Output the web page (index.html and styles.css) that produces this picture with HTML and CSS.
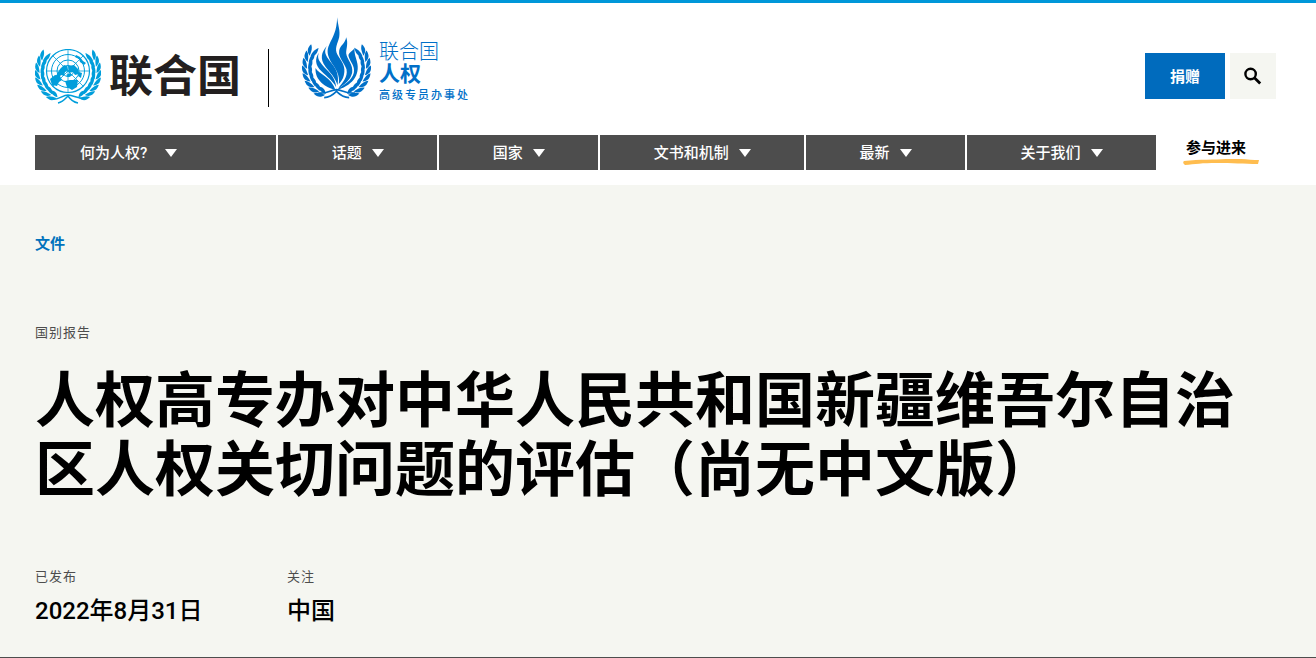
FILE: index.html
```html
<!DOCTYPE html>
<html lang="zh-CN">
<head>
<meta charset="utf-8">
<meta name="viewport" content="width=device-width, initial-scale=1">
<title>人权高专办对中华人民共和国新疆维吾尔自治区人权关切问题的评估</title>
<link rel="stylesheet" href="styles.css">
</head>
<body>
<svg class="defs" aria-hidden="true">
  <defs>
    <g id="leaf-pair">
      <path d="M0 5C5 3 6 0 5 -5C2 -3 1 0 0 5Z"/>
      <path d="M-1 5C-5 2 -5 -1 -3 -6C-1 -3 0 0 -1 5Z"/>
    </g>
    <g id="branch">
      <use href="#leaf-pair" transform="rotate(56) translate(0 -28) rotate(-90)"/>
      <use href="#leaf-pair" transform="rotate(69) translate(0 -28) rotate(-90)"/>
      <use href="#leaf-pair" transform="rotate(82) translate(0 -28) rotate(-90)"/>
      <use href="#leaf-pair" transform="rotate(95) translate(0 -28) rotate(-90)"/>
      <use href="#leaf-pair" transform="rotate(108) translate(0 -28) rotate(-90)"/>
      <use href="#leaf-pair" transform="rotate(121) translate(0 -28) rotate(-90)"/>
      <use href="#leaf-pair" transform="rotate(134) translate(0 -28) rotate(-90)"/>
      <use href="#leaf-pair" transform="rotate(147) translate(0 -28) rotate(-90)"/>
    </g>
  </defs>
</svg>

<header class="site-header">
  <div class="masthead">
    <a class="un-logo" href="#">
      <svg class="un-emblem" viewBox="0 0 66 56" aria-hidden="true">
        <g fill="none" stroke="currentColor">
          <circle cx="33" cy="22" r="5.5"/><circle cx="33" cy="22" r="11"/><circle cx="33" cy="22" r="16.5"/><circle cx="33" cy="22" r="21.5" stroke-width="1.2"/>
          <path d="M33 .5v43M11.5 22h43M17.8 6.8l30.4 30.4M48.2 6.8L17.8 37.2" stroke-width=".8"/>
        </g>
        <path fill="currentColor" d="M41 6l4 2 3 4 3 2-2 2-4-3-1-3-4-2zM25 20l4-4 3 1 1 4-3 2-1 4-3-1-2 3-4 1 2-5zM15 30l5-4 5 1 2 4-3 2-2 4-5-1-1-3zM33 17l6-1 4 4 1 5-4 1-2-3-4 1zM31 26l4-2 2 2-3 2zM30 32l5-1 8 0-1 7-5 3-5-3zM44 23l3 1-1 5-3-2z"/>
        <g fill="currentColor" transform="translate(33 23)">
          <use href="#branch"/>
          <use href="#branch" transform="scale(-1 1)"/>
        </g>
        <path d="M15 50c8 2 12-4 18-4s12 5 19 3M23 54c5-1 8-5 10-7 2 3 5 6 10 7" fill="none" stroke="currentColor" stroke-width="1.5"/>
      </svg>
      <span class="un-name">联合国</span>
    </a>
    <a class="ohchr-logo" href="#">
      <svg class="flame" viewBox="6 8 206 246" aria-hidden="true">
        <g fill="currentColor">
          <path d="M111 6C113 30 121 46 117 66C112 86 102 100 112 118C124 138 138 152 131 180C128 192 124 198 116 206C120 178 106 160 94 142C82 122 78 106 88 86C98 64 110 48 111 6Z"/>
          <path d="M138 66C145 84 138 100 138 114C140 132 160 148 156 172C151 194 134 206 114 220C126 202 144 186 139 162C133 142 114 128 117 106C120 90 136 84 138 66Z"/>
          <path d="M164 96C161 112 166 122 170 138C182 182 154 212 106 226C130 208 156 196 161 172C165 152 150 140 145 122C143 112 160 108 164 96Z"/>
          <path d="M80 92C72 106 74 116 84 130C98 150 120 166 112 210C106 186 88 170 76 154C58 130 64 110 80 92Z"/>
          <path d="M56 112C51 126 55 134 66 148C82 168 106 182 108 216C98 196 80 184 64 168C44 148 44 130 56 112Z"/>
          <path d="M46 158C56 176 94 186 106 224C76 216 44 196 46 158Z"/>
        </g>
        <g fill="currentColor" transform="translate(109 157) scale(3.1)">
          <use href="#branch"/>
          <use href="#branch" transform="scale(-1 1)"/>
        </g>
        <path d="M54 233c26 4 38-10 55-10s30 14 56 10M72 247c20-1 30-12 37-19 8 8 20 18 38 19" fill="none" stroke="currentColor" stroke-width="5"/>
      </svg>
      <span class="ohchr-name">
        <span class="ohchr-un">联合国</span>
        <strong class="ohchr-rights">人权</strong>
        <span class="ohchr-office">高级专员办事处</span>
      </span>
    </a>
    <div class="actions">
      <a class="donate" href="#">捐赠</a>
      <button class="search" type="button" aria-label="搜索">
        <svg viewBox="0 0 18 18" width="18" height="18" fill="none" stroke="currentColor" stroke-width="2.4" aria-hidden="true"><circle cx="6.6" cy="7" r="5.2"/><path d="M10.4 10.8l5.8 5.8" stroke-width="2.8"/></svg>
      </button>
    </div>
  </div>
  <nav class="main-nav">
    <div class="menu">
      <button class="menu-item menu-first" type="button">何为人权?</button>
      <button class="menu-item" type="button">话题</button>
      <button class="menu-item" type="button">国家</button>
      <button class="menu-item" type="button">文书和机制</button>
      <button class="menu-item" type="button">最新</button>
      <button class="menu-item" type="button">关于我们</button>
    </div>
    <a class="involved" href="#">参与进来
      <svg class="brush" viewBox="0 0 76 6" preserveAspectRatio="none" aria-hidden="true"><path d="M1 2C17 0 32 1 43 0S66 1 76 1L75 5C61 5 49 4 34 4S12 5 2 6Q-1 4 1 2Z"/></svg>
    </a>
  </nav>
</header>

<main class="hero">
  <a class="crumb" href="#">文件</a>
  <p class="label kind">国别报告</p>
  <h1 class="title">人权高专办对中华人民共和国新疆维吾尔自治区人权关切问题的评估（尚无中文版）</h1>
  <dl class="facts">
    <div class="fact"><dt class="label">已发布</dt><dd class="value">2022年8月31日</dd></div>
    <div class="fact"><dt class="label">关注</dt><dd class="value">中国</dd></div>
  </dl>
</main>
</body>
</html>
```

FILE: styles.css
```css
* { box-sizing: border-box; }

body {
  margin: 0;
  background: #fff;
  color: #000;
  font-family: Roboto, "Noto Sans CJK SC", sans-serif;
}

a { color: inherit; text-decoration: none; }
button { border: 0; font: inherit; cursor: pointer; }
.defs { display: block; width: 0; height: 0; }

.site-header {
  border-top: 3px solid #0097d9;
  padding: 15px 40px 15px 35px;
}

.masthead {
  display: flex;
  align-items: flex-start;
  min-height: 117px;
}

.un-logo {
  display: flex;
  align-items: flex-start;
  gap: 8px;
  margin-top: 31px;
  padding-right: 27px;
  height: 58px;
  border-right: 1px solid #000;
  color: #009edb;
}
.un-emblem { width: 66px; height: 56px; }
.un-name {
  color: #231f20;
  font-size: 44px;
  font-weight: 700;
  line-height: 56px;
}

.ohchr-logo {
  display: flex;
  gap: 8px;
  margin-left: 33px;
  color: #0070c8;
}
.flame { width: 69px; height: 82px; overflow: visible; }
.ohchr-name {
  display: flex;
  flex-direction: column;
  padding-top: 23px;
}
.ohchr-un { font-size: 20px; font-weight: 300; line-height: 22px; }
.ohchr-rights { font-size: 21px; font-weight: 700; line-height: 23px; }
.ohchr-office {
  font-size: 11px;
  font-weight: 500;
  line-height: 20px;
  letter-spacing: 2px;
}

.actions {
  display: flex;
  gap: 5px;
  margin: 35px 0 0 auto;
}
.donate, .search {
  display: flex;
  align-items: center;
  justify-content: center;
  height: 46px;
}
.donate {
  padding: 0 25px 2px;
  background: #006bbd;
  color: #fff;
  font-size: 15px;
  font-weight: 700;
}
.search {
  width: 46px;
  padding: 0;
  background: #f5f6f1;
  color: #000;
}

.main-nav { display: flex; }
.menu {
  display: flex;
  flex: 1;
  gap: 2px;
}
.menu-item {
  display: flex;
  flex: 1 1 auto;
  align-items: center;
  justify-content: center;
  gap: 10px;
  height: 35px;
  padding: 0 0 2px;
  background: #4d4d4d;
  color: #fff;
  font-size: 15px;
  font-weight: 500;
}
.menu-item::after {
  content: "";
  margin-top: 2px;
  border: 6px solid transparent;
  border-top: 8px solid #fff;
  border-bottom: 0;
}
.menu-first {
  flex-grow: 0;
  gap: 18px;
  padding: 0 99px 2px 45px;
}
.involved {
  position: relative;
  margin-right: 17px;
  padding: 0 13px 0 30px;
  font-size: 15px;
  font-weight: 700;
  line-height: 26px;
}
.brush {
  position: absolute;
  right: 0;
  top: 24px;
  width: 76px;
  height: 6px;
  fill: #ffbd4f;
}

.hero {
  padding: 48px 35px 32px;
  border-bottom: 1px solid #4d4d4d;
  background: #f5f6f1;
}
.crumb {
  display: block;
  color: #0072bc;
  font-size: 15px;
  font-weight: 700;
  line-height: 22px;
}
.label {
  margin: 0;
  color: #4d4d4d;
  font-size: 13px;
  letter-spacing: 1px;
  line-height: 20px;
}
.kind { margin-top: 68px; }
.title {
  margin: 24px 0 62px;
  font-size: 60px;
  font-weight: 700;
  line-height: 69px;
}
.facts {
  display: flex;
  margin: 0;
}
.fact { min-width: 252px; }
.value {
  margin: 10px 0 0;
  font-size: 24px;
  font-weight: 500;
  line-height: 28px;
}
```
